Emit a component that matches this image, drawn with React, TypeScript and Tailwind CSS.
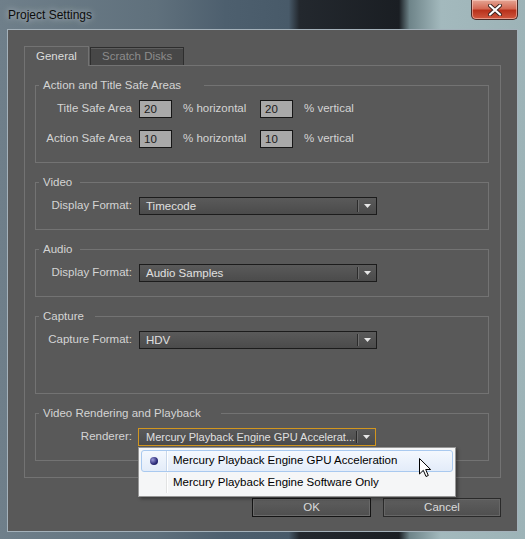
import React from "react";

const labelCls = "w-[96px] shrink-0 text-right text-[#d4d4d4]";

const Dropdown = ({ value, active = false, textCls = "" }: { value: string; active?: boolean; textCls?: string }) => (
  <div
    className={`flex h-[18px] w-[238px] items-center border bg-[linear-gradient(#5a5a5a,#4b4b4b)] ${
      active ? "border-[#d2961e]" : "border-[#1c1c1c]"
    }`}
  >
    <span className={`min-w-0 flex-1 overflow-hidden whitespace-nowrap pl-[6px] leading-[16px] text-[#e0e0e0] ${textCls}`}>{value}</span>
    <span className="h-[12px] w-[2px] shrink-0 border-x border-l-[#2b2b2b] border-r-[#6e6e6e]" />
    <span className="flex w-[17px] shrink-0 justify-center">
      <svg width="7" height="4" viewBox="0 0 7 4">
        <path d="M0 0h7L3.5 4z" fill="#e6e6e6" />
      </svg>
    </span>
  </div>
);

const NumBox = ({ value }: { value: string }) => (
  <div className="h-[18px] w-[33px] shrink-0 border border-[#161616] bg-[#a9a9a9] pl-[4px] leading-[16px] text-[#1b1b1b]">
    {value}
  </div>
);

const Group = ({
  title,
  gapCls,
  bodyCls,
  children,
}: {
  title: string;
  gapCls: string;
  bodyCls: string;
  children: React.ReactNode;
}) => (
  <fieldset className={`border border-[#737373] ${bodyCls}`}>
    <legend className={`ml-[3px] pl-[4px] leading-[14px] text-[#d4d4d4] ${gapCls}`}>{title}</legend>
    {children}
  </fieldset>
);

const SafeRow = ({ label, h, v }: { label: string; h: string; v: string }) => (
  <div className="flex h-[18px] items-center gap-[7px]">
    <span className={labelCls}>{label}</span>
    <NumBox value={h} />
    <span className="ml-[4px] w-[70px] text-[#d4d4d4]">% horizontal</span>
    <NumBox value={v} />
    <span className="ml-[4px] text-[#d4d4d4]">% vertical</span>
  </div>
);

const Cursor = () => (
  <svg width="13" height="20" viewBox="0 0 13 20">
    <path d="M0.5 0.5 V16 L4.3 12.3 L7 18.5 L9.3 17.5 L6.7 11.5 H11.6 Z" fill="#fff" stroke="#000" strokeWidth="1" strokeLinejoin="round" />
  </svg>
);

const App = () => {
  return (
    <div className="flex h-[539px] w-[525px] flex-col overflow-hidden bg-[linear-gradient(to_right,#6f7f8a_0%,#5f707c_30%,#4d5f6e_43%,#485a69_55%,#23282e_57%,#1a1e23_76%,#6e8489_78%,#a3b9bd_84%,#9db3b7_100%)] font-['Liberation_Sans',Arial,sans-serif] text-[11.5px]">
      <div className="flex h-[29px] shrink-0 items-start">
        <span className="pl-[8px] pt-[7px] text-[12px] leading-[16px] text-[#0c0c0c] [text-shadow:0_0_6px_rgba(255,255,255,0.7)]">
          Project Settings
        </span>
        <div className="ml-auto mr-[7px] flex h-[20px] w-[47px] items-center justify-center rounded-b-[5px] border border-t-0 border-[#4a2a26] bg-[linear-gradient(#e5a594_0%,#d46a55_45%,#b8321c_55%,#d0583f_100%)] shadow-[inset_0_0_0_1px_rgba(255,220,210,0.5)]">
          <svg width="14" height="12" viewBox="0 0 14 12">
            <path d="M2 1.5 L12 10.5 M12 1.5 L2 10.5" stroke="#3a2420" strokeWidth="4" strokeLinecap="round" />
            <path d="M2 1.5 L12 10.5 M12 1.5 L2 10.5" stroke="#fff" strokeWidth="2.2" strokeLinecap="round" />
          </svg>
        </div>
      </div>

      <div className="mx-[7px] flex h-[503px] shrink-0 flex-col border border-[#a4b1ba] bg-[#595959] pl-[16px] pr-[16px] pt-[16px]">
        <div className="flex items-end">
          <div className="relative z-10 -mb-px h-[20px] w-[65px] border border-b-0 border-[#737373] bg-[#595959] pl-[11px] leading-[18px] text-[#dcdcdc]">
            General
          </div>
          <div className="ml-px h-[18px] w-[94px] border border-b-0 border-[#2e2e2e] bg-[#474747] pl-[11px] leading-[16px] text-[#8c8c8c] shadow-[inset_0_1px_0_#5e5e5e]">
            Scratch Disks
          </div>
        </div>

        <div className="flex w-[477px] flex-col gap-[12px] border border-[#737373] pb-[16px] pl-[10px] pr-[11px] pt-[12px]">
          <Group title="Action and Title Safe Areas" gapCls="pr-[23px]" bodyCls="pt-[8px] pb-[14px]">
            <div className="flex flex-col gap-[12px]">
              <SafeRow label="Title Safe Area" h="20" v="20" />
              <SafeRow label="Action Safe Area" h="10" v="10" />
            </div>
          </Group>

          <Group title="Video" gapCls="pr-[8px]" bodyCls="pt-[8px] pb-[14px]">
            <div className="flex items-center gap-[7px]">
              <span className={labelCls}>Display Format:</span>
              <Dropdown value="Timecode" />
            </div>
          </Group>

          <Group title="Audio" gapCls="pr-[8px]" bodyCls="pt-[8px] pb-[14px]">
            <div className="flex items-center gap-[7px]">
              <span className={labelCls}>Display Format:</span>
              <Dropdown value="Audio Samples" />
            </div>
          </Group>

          <Group title="Capture" gapCls="pr-[11px]" bodyCls="pt-[8px] pb-[44px]">
            <div className="flex items-center gap-[7px]">
              <span className={labelCls}>Capture Format:</span>
              <Dropdown value="HDV" />
            </div>
          </Group>

          <Group title="Video Rendering and Playback" gapCls="pr-[20px]" bodyCls="pt-[8px] pb-[14px]">
            <div className="flex items-center gap-[6px]">
              <span className={labelCls}>Renderer:</span>
              <div className="relative z-20">
                <Dropdown value="Mercury Playback Engine GPU Accelerat..." active textCls="text-[11px] pl-[7px]" />
                <div className="absolute left-0 top-[19px] flex w-[318px] flex-col border border-[#979797] bg-[#f5f6f7] p-[2px] text-[11.5px] text-black shadow-[2px_2px_3px_rgba(0,0,0,0.35)]">
                  <div className="flex h-[22px] items-center rounded-[3px] border border-[#a9c9ef] bg-[linear-gradient(#f4f8fe,#e3ecf9)]">
                    <span className="flex w-[24px] justify-center">
                      <span className="h-[8px] w-[8px] rounded-full bg-[radial-gradient(circle_at_35%_35%,#9a9ad8,#2a2a78_60%,#14144a)]" />
                    </span>
                    <span className="h-full w-[2px] border-x border-l-[#c9d7ea] border-r-white" />
                    <span className="pl-[5px]">Mercury Playback Engine GPU Acceleration</span>
                  </div>
                  <div className="flex h-[22px] items-center border border-transparent">
                    <span className="w-[24px]" />
                    <span className="h-full w-[2px] border-x border-l-[#e2e3e3] border-r-white" />
                    <span className="pl-[5px]">Mercury Playback Engine Software Only</span>
                  </div>
                  <div className="absolute left-[280px] top-[10px]">
                    <Cursor />
                  </div>
                </div>
              </div>
            </div>
          </Group>
        </div>

        <div className="mt-[20px] flex w-[477px] justify-end gap-[12px]">
          <div className="flex h-[19px] w-[119px] items-center justify-center border border-[#141414] bg-[linear-gradient(#5e5e5e,#4f4f4f)] text-[#dadada] shadow-[inset_0_0_0_1px_#6a6a6a]">
            OK
          </div>
          <div className="flex h-[19px] w-[118px] items-center justify-center border border-[#2a2a2a] bg-[linear-gradient(#5e5e5e,#4f4f4f)] text-[#dadada] shadow-[inset_0_0_0_1px_#666]">
            Cancel
          </div>
        </div>
      </div>
    </div>
  );
};

export default App;
